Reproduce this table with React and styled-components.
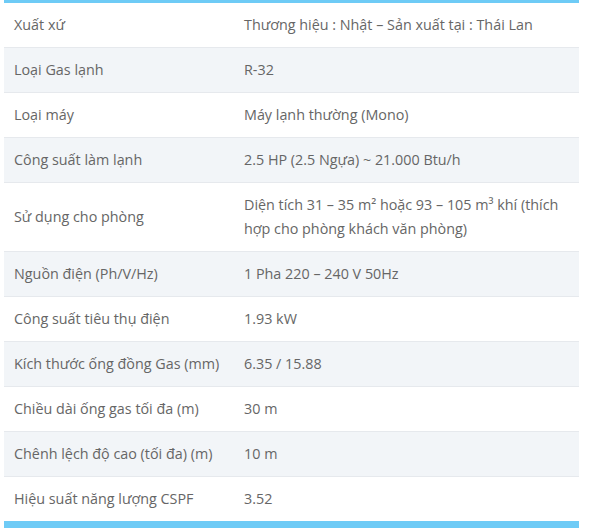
import React from "react";
import styled, { createGlobalStyle } from "styled-components";

const Global = createGlobalStyle`
  html, body { margin: 0; padding: 0; background: #fff; }
  body { font-family: "Open Sans", "Noto Sans", sans-serif; }
`;

const Wrap = styled.div`
  padding: 0 17px 0 4px;
`;

const Table = styled.table`
  width: 575px;
  border-collapse: collapse;
  border-top: 3px solid #6ecbf6;
  border-bottom: 7px solid #6ecbf6;
  font-size: 14.35px;
  line-height: 24px;
  color: #666;
`;

const Row = styled.tr`
  background: ${(p) => (p.$alt ? "#f2f5f8" : "#fff")};
  border-bottom: 1px solid #e6e9ed;
`;

const Cell = styled.td`
  padding: 10px;
  vertical-align: middle;
  width: ${(p) => (p.$label ? "210px" : "auto")};
`;

const rows = [
  ["Xuất xứ", "Thương hiệu : Nhật – Sản xuất tại : Thái Lan"],
  ["Loại Gas lạnh", "R-32"],
  ["Loại máy", "Máy lạnh thường (Mono)"],
  ["Công suất làm lạnh", "2.5 HP (2.5 Ngựa) ~ 21.000 Btu/h"],
  ["Sử dụng cho phòng", "Diện tích 31 – 35 m² hoặc 93 – 105 m³ khí (thích hợp cho phòng khách văn phòng)"],
  ["Nguồn điện (Ph/V/Hz)", "1 Pha 220 – 240 V 50Hz"],
  ["Công suất tiêu thụ điện", "1.93 kW"],
  ["Kích thước ống đồng Gas (mm)", "6.35 / 15.88"],
  ["Chiều dài ống gas tối đa (m)", "30 m"],
  ["Chênh lệch độ cao (tối đa) (m)", "10 m"],
  ["Hiệu suất năng lượng CSPF", "3.52"],
];

export default function App() {
  return (
    <>
      <Global />
      <Wrap>
        <Table>
          <tbody>
            {rows.map(([k, v], i) => (
              <Row key={k} $alt={i % 2 === 1}>
                <Cell $label>{k}</Cell>
                <Cell>{v}</Cell>
              </Row>
            ))}
          </tbody>
        </Table>
      </Wrap>
    </>
  );
}
